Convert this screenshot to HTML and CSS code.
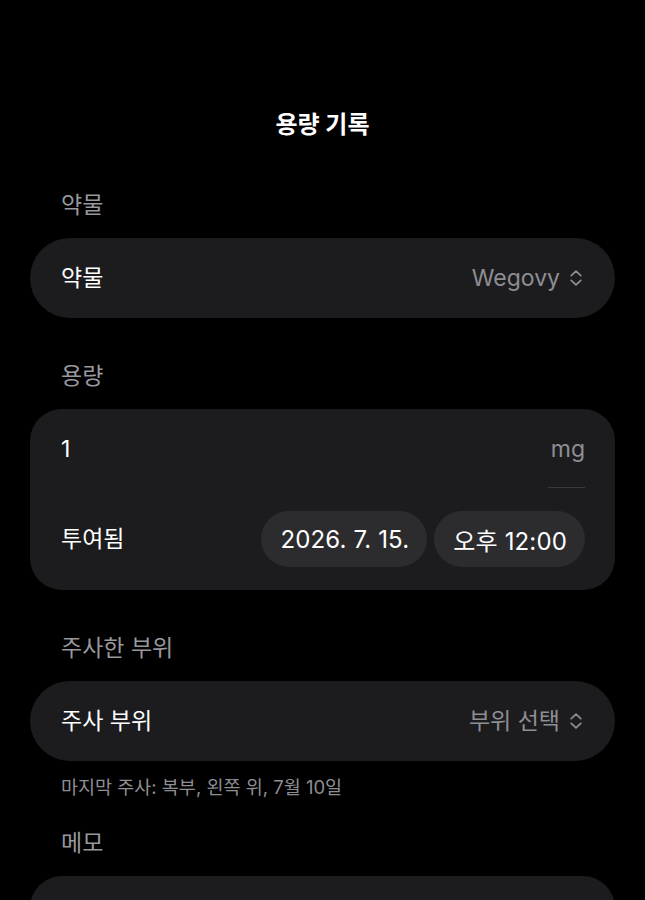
FILE: index.html
```html
<!DOCTYPE html>
<html lang="ko">
<head>
<meta charset="utf-8">
<title>용량 기록</title>
<link rel="stylesheet" href="styles.css">
</head>
<body>
<div class="page">
  <header class="nav">
    <h1 class="nav-title">용량 기록</h1>
  </header>

  <section class="section">
    <div class="section-label">약물</div>
    <div class="card pill-card">
      <span class="row-label">약물</span>
      <span class="row-value">Wegovy
        <svg class="updown" viewBox="0 0 14 18" width="14" height="18" aria-hidden="true">
          <path d="M2.2 6.6 L7 2.2 L11.8 6.6 M2.2 11.4 L7 15.8 L11.8 11.4" fill="none" stroke="currentColor" stroke-width="1.7" stroke-linecap="round" stroke-linejoin="round"/>
        </svg>
      </span>
    </div>
  </section>

  <section class="section">
    <div class="section-label">용량</div>
    <div class="card dose-card">
      <div class="dose-row">
        <span class="dose-value">1</span>
        <span class="dose-unit">mg</span>
      </div>
      <div class="given-row">
        <span class="row-label">투여됨</span>
        <div class="chips">
          <span class="chip">2026. 7. 15.</span>
          <span class="chip">오후 12:00</span>
        </div>
      </div>
    </div>
  </section>

  <section class="section has-note">
    <div class="section-label">주사한 부위</div>
    <div class="card pill-card">
      <span class="row-label">주사 부위</span>
      <span class="row-value">부위 선택
        <svg class="updown" viewBox="0 0 14 18" width="14" height="18" aria-hidden="true">
          <path d="M2.2 6.6 L7 2.2 L11.8 6.6 M2.2 11.4 L7 15.8 L11.8 11.4" fill="none" stroke="currentColor" stroke-width="1.7" stroke-linecap="round" stroke-linejoin="round"/>
        </svg>
      </span>
    </div>
    <p class="note">마지막 주사: 복부, 왼쪽 위, 7월 10일</p>
  </section>

  <section class="section">
    <div class="section-label">메모</div>
    <div class="card memo-card"></div>
  </section>
</div>
</body>
</html>
```

FILE: styles.css
```css
html, body {
  margin: 0;
  padding: 0;
  background: #000000;
}

body {
  font-family: Inter, "Noto Sans CJK KR", sans-serif;
  color: #ffffff;
  font-size: 23px;
  -webkit-font-smoothing: antialiased;
}

.page {
  padding: 110px 30px 0 30px;
  overflow: hidden;
  height: 790px;
}

.nav {
  display: flex;
  justify-content: center;
  height: 30px;
}

.nav-title {
  margin: 0;
  font-size: 24px;
  line-height: 30px;
  font-weight: 700;
  color: #ffffff;
}

.section {
  margin-top: 43px;
}

.section:first-of-type {
  margin-top: 50px;
}

.section.has-note + .section {
  margin-top: 29px;
}

.section-label {
  padding: 0 31px;
  line-height: 30px;
  color: #98989e;
  margin-bottom: 18px;
}

.card {
  background: #1c1c1e;
}

.pill-card {
  height: 80px;
  border-radius: 40px;
  display: flex;
  align-items: center;
  justify-content: space-between;
  padding: 0 32px 0 31px;
  box-sizing: border-box;
}

.row-label {
  color: #ffffff;
  line-height: 30px;
}

.row-value {
  display: flex;
  align-items: center;
  gap: 9px;
  color: #8e8e93;
  line-height: 30px;
}

.updown {
  display: block;
  color: #8e8e93;
}

.dose-card {
  border-radius: 32px;
  padding: 22px 30px 23px 31px;
}

.dose-row {
  display: flex;
  justify-content: space-between;
  align-items: flex-start;
}

.dose-value {
  line-height: 36px;
  color: #ffffff;
}

.dose-unit {
  line-height: 36px;
  color: #8e8e93;
  padding-bottom: 20px;
  border-bottom: 1px solid #3a3a3c;
  min-width: 37px;
  text-align: right;
}

.given-row {
  display: flex;
  justify-content: space-between;
  align-items: center;
  margin-top: 23px;
}

.chips {
  display: flex;
  gap: 7px;
}

.chip {
  height: 56px;
  border-radius: 28px;
  background: #2c2c2e;
  padding: 0 18px 0 19px;
  display: flex;
  align-items: center;
  color: #ffffff;
  font-size: 24px;
  letter-spacing: 0.15px;
}

.note {
  margin: 14px 0 0 0;
  padding: 0 31px;
  font-size: 18.5px;
  line-height: 24px;
  color: #8e8e93;
}

.memo-card {
  height: 120px;
  border-radius: 32px;
}
```
